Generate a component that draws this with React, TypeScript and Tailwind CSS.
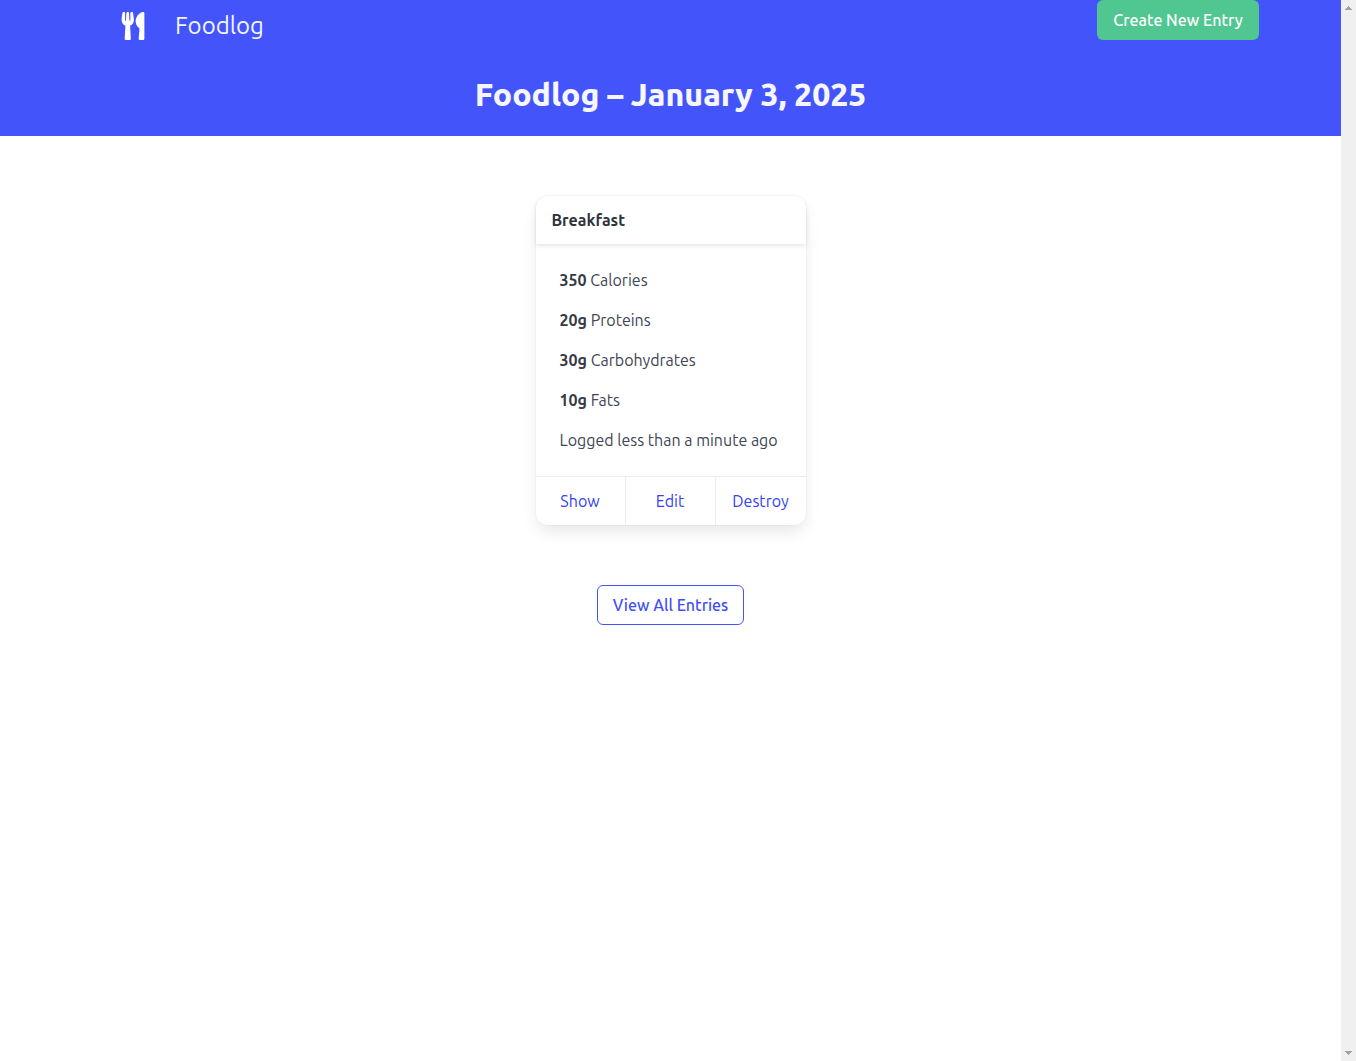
import { FaUtensils } from "react-icons/fa";

const nutrients = [
  { amount: "350", name: "Calories" },
  { amount: "20g", name: "Proteins" },
  { amount: "30g", name: "Carbohydrates" },
  { amount: "10g", name: "Fats" },
];

const actions = ["Show", "Edit", "Destroy"];

function Header() {
  return (
    <header className="bg-[#4454fb] pb-6">
      <nav className="flex h-[52px] items-start justify-between pr-[82px] pl-[121px]">
        <a href="#" className="flex h-full items-center gap-[30px] text-2xl font-normal text-[#f3f4ff]">
          <FaUtensils className="h-7 w-6 text-white" aria-hidden="true" />
          <span>Foodlog</span>
        </a>
        <button type="button" className="h-10 w-[162px] rounded-md bg-[#50c790] text-base font-medium whitespace-nowrap text-white">
          Create New Entry
        </button>
      </nav>
      <h1 className="pt-6 text-center text-[32px] leading-9 font-extrabold text-[#f6f6ff]">
        Foodlog – January 3, 2025
      </h1>
    </header>
  );
}

function EntryCard() {
  return (
    <article className="w-[270px] rounded-xl bg-white shadow-[0_8px_16px_-2px_rgba(10,10,10,0.1),0_0_0_1px_rgba(10,10,10,0.02)]">
      <h2 className="rounded-t-xl px-4 py-3 font-semibold text-[#2e333d] shadow-[0_2px_4px_rgba(10,10,10,0.1)]">
        Breakfast
      </h2>
      <div className="flex flex-col gap-4 p-6 whitespace-nowrap">
        {nutrients.map((n) => (
          <p key={n.name}>
            <strong className="font-semibold text-[#363b45]">{n.amount}</strong> {n.name}
          </p>
        ))}
        <p>Logged less than a minute ago</p>
      </div>
      <footer className="grid grid-cols-3 border-t border-[#ebecf0]">
        {actions.map((a) => (
          <a
            key={a}
            href="#"
            className="border-r border-[#ebecf0] py-3 text-center text-[#3442f0] last:border-r-0"
          >
            {a}
          </a>
        ))}
      </footer>
    </article>
  );
}

function Scrollbar() {
  return (
    <div className="flex w-[15px] shrink-0 flex-col items-center justify-between bg-[#f0f0f0] py-1.5" aria-hidden="true">
      <svg className="h-1 w-[7px]" viewBox="0 0 7 4" fill="#a3a3a3" shapeRendering="crispEdges">
        <path d="M3 0h1v1h1v1h1v1h1v1H0V3h1V2h1V1h1z" />
      </svg>
      <svg className="h-1 w-[7px]" viewBox="0 0 7 4" fill="#a3a3a3" shapeRendering="crispEdges">
        <path d="M0 0h7v1H6v1H5v1H4v1H3V3H2V2H1V1H0z" />
      </svg>
    </div>
  );
}

export default function App() {
  return (
    <div className="flex min-h-screen bg-white font-['Ubuntu','Noto_Sans',sans-serif] text-base font-normal text-[#404654]">
      <div className="min-w-0 grow">
        <Header />
        <main className="flex flex-col items-center gap-[60px] py-[60px]">
          <EntryCard />
          <button type="button" className="h-10 w-[147px] rounded-md border border-[#4454fb] font-medium whitespace-nowrap text-[#3f4ff5]">
            View All Entries
          </button>
        </main>
      </div>
      <Scrollbar />
    </div>
  );
}
